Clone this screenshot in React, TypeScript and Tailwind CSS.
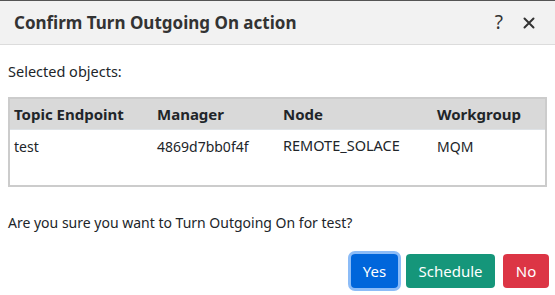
import React from "react";

export default function App() {
  const font = { fontFamily: '"Segoe UI", "Noto Sans", "Open Sans", sans-serif' };
  return (
    <div className="w-[555px] h-[295px] bg-white text-[#212529] overflow-hidden" style={font}>
      <div className="border-t border-[#555]" />
      <div className="h-[44px] bg-[#f2f2f2] border-b border-[#dcdcdc] flex items-center pl-[14px] pr-[20px]">
        <div className="flex-1 text-[17px] font-bold text-[#333]">Confirm Turn Outgoing On action</div>
        <div className="flex items-center gap-[20px] text-[#333]">
          <span className="text-[19px] leading-none">?</span>
          <svg width="12" height="12" viewBox="0 0 12 12" stroke="#333" strokeWidth="2" strokeLinecap="round">
            <path d="M1.5 1.5 L10.5 10.5 M10.5 1.5 L1.5 10.5" />
          </svg>
        </div>
      </div>
      <div className="px-[8px]">
        <div className="mt-[16px] text-[14.5px] leading-[20px]">Selected objects:</div>
        <div className="mt-[16px] h-[90px] border-2 border-[#cccccc] w-[539px]">
          <div className="grid grid-cols-[143px_126px_154px_1fr] bg-[#d9d9d9] h-[31px] items-center text-[15px] font-bold px-[4px] border-b border-[#dee2e6]">
            <div>Topic Endpoint</div>
            <div>Manager</div>
            <div>Node</div>
            <div>Workgroup</div>
          </div>
          <div className="grid grid-cols-[143px_126px_154px_1fr] h-[32px] items-center text-[14px] px-[4px]">
            <div>test</div>
            <div>4869d7bb0f4f</div>
            <div className="text-[14.5px]">REMOTE_SOLACE</div>
            <div>MQM</div>
          </div>
        </div>
        <div className="mt-[26px] text-[14px] leading-[20px]">Are you sure you want to Turn Outgoing On for test?</div>
        <div className="mt-[21px] flex justify-end gap-[8px] mr-[-2px]">
          <button className="h-[34px] w-[47px] rounded-[4px] bg-[#0066db] text-white text-[15px] ring-[3px] ring-[#8cbcf7]">Yes</button>
          <button className="h-[34px] w-[89px] rounded-[4px] bg-[#15967a] text-white text-[15px]">Schedule</button>
          <button className="h-[34px] w-[46px] rounded-[4px] bg-[#dc3545] text-white text-[15px]">No</button>
        </div>
      </div>
    </div>
  );
}
